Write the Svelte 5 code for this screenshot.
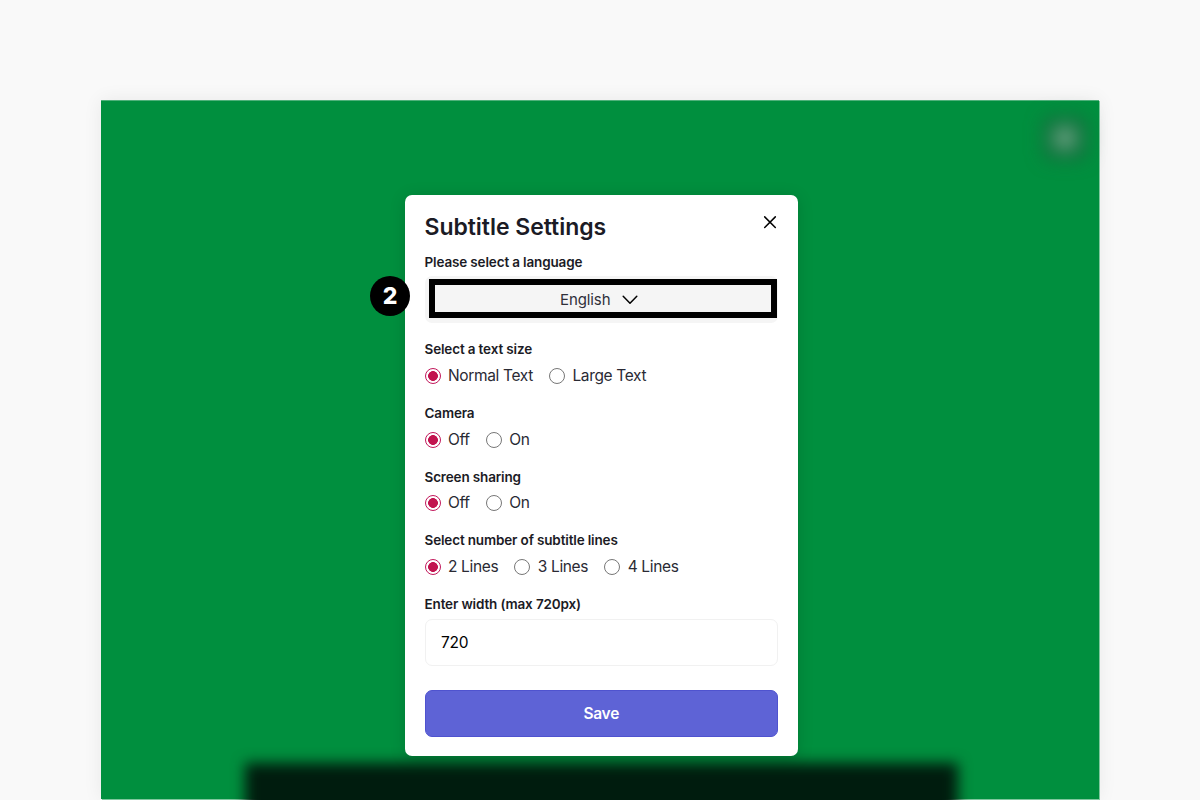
<script>
  let textSize = 'Normal Text';
  let camera = 'Off';
  let sharing = 'Off';
  let lines = '2 Lines';
  let width = '720';

  function save(e) {
    e.preventDefault();
    // TODO: store the settings
  }
</script>

<main>
  <div class="stage">
    <div class="gear"><span></span></div>
    <div class="subtitles"></div>
  </div>

  <form class="modal" on:submit={save}>
    <header>
      <h1>Subtitle Settings</h1>
      <button type="button" class="close" aria-label="Close">
        <svg width="12" height="12" viewBox="0 0 12 12">
          <path d="M0.7 0.9 L11.3 11.5 M11.3 0.9 L0.7 11.5" />
        </svg>
      </button>
    </header>

    <h2>Please select a language</h2>
    <button type="button" class="language">
      <span>English</span>
      <svg width="16" height="10" viewBox="0 0 16 10">
        <path d="M1.2 1.2 L8 8.2 L14.8 1.2" />
      </svg>
      <span class="highlight"></span>
      <span class="step">2</span>
    </button>

    <h2>Select a text size</h2>
    <div class="options">
      {#each ['Normal Text', 'Large Text'] as option}
        <label><input type="radio" name="size" value={option} bind:group={textSize} />{option}</label>
      {/each}
    </div>

    <h2>Camera</h2>
    <div class="options">
      {#each ['Off', 'On'] as option}
        <label><input type="radio" name="camera" value={option} bind:group={camera} />{option}</label>
      {/each}
    </div>

    <h2>Screen sharing</h2>
    <div class="options">
      {#each ['Off', 'On'] as option}
        <label><input type="radio" name="sharing" value={option} bind:group={sharing} />{option}</label>
      {/each}
    </div>

    <h2>Select number of subtitle lines</h2>
    <div class="options">
      {#each ['2 Lines', '3 Lines', '4 Lines'] as option}
        <label><input type="radio" name="lines" value={option} bind:group={lines} />{option}</label>
      {/each}
    </div>

    <h2>Enter width (max 720px)</h2>
    <input class="width" type="text" aria-label="Width" bind:value={width} />
    <button type="submit" class="save">Save</button>
  </form>
</main>

<style>
  :global(body) {
    margin: 0;
    background: #f9f9f9;
  }
  main {
    position: relative;
    box-sizing: border-box;
    height: 800px;
    padding: 100px 101px 1px 101px;
    overflow: hidden;
    font-family: Inter, sans-serif;
    color: #1b1b25;
  }
  .stage {
    position: relative;
    box-sizing: border-box;
    height: 100%;
    border-top: 1px solid #4fb17a;
    background: #008f3e;
    box-shadow: 1px 1px 0 #80c79e, 0 0 18px rgba(0, 0, 0, 0.07);
  }
  .gear {
    position: absolute;
    top: 15px;
    right: 12px;
    width: 44px;
    height: 44px;
    border-radius: 8px;
    background: rgba(28, 90, 60, 0.6);
    filter: blur(9px);
  }
  .gear span {
    position: absolute;
    inset: 10px;
    border-radius: 50%;
    background: rgba(140, 185, 160, 0.7);
  }
  .subtitles {
    position: absolute;
    left: 144px;
    right: 141px;
    top: 662px;
    height: 100px;
    background: #001c0e;
    filter: blur(7px);
  }
  .modal {
    position: absolute;
    top: 195px;
    left: 405px;
    box-sizing: border-box;
    width: 393px;
    height: 561px;
    padding: 17px 20px 20px 19.5px;
    border-radius: 7px;
    background: #fff;
    box-shadow: 0 2px 16px rgba(0, 0, 0, 0.15);
  }
  header {
    display: flex;
    justify-content: space-between;
    height: 30px;
    margin-bottom: 10px;
  }
  h1 {
    margin: 0;
    font-size: 23px;
    font-weight: 600;
    letter-spacing: -0.04px;
    line-height: 30px;
  }
  h2 {
    margin: 0;
    font-size: 13.5px;
    font-weight: 600;
    letter-spacing: -0.15px;
    line-height: 20px;
  }
  button {
    font-family: inherit;
    cursor: pointer;
  }
  .close {
    width: 12px;
    height: 12px;
    margin: 4px 2px 0 0;
    padding: 0;
    border: none;
    background: none;
  }
  svg {
    display: block;
    overflow: visible;
    fill: none;
    stroke: #000;
    stroke-width: 1.5;
    stroke-linecap: round;
    stroke-linejoin: round;
  }
  .language {
    position: relative;
    display: flex;
    align-items: center;
    justify-content: center;
    gap: 12px;
    width: 353.5px;
    height: 47px;
    margin: 4px 0 16px;
    padding: 0 4px 0 0;
    border: none;
    border-radius: 7px;
    background: #f5f5f5;
    color: #30303a;
    font-size: 15px;
    letter-spacing: -0.1px;
  }
  .highlight {
    position: absolute;
    left: 4.5px;
    top: 3px;
    box-sizing: border-box;
    width: 348px;
    height: 39px;
    border: 6px solid #000;
  }
  .step {
    position: absolute;
    left: -54.5px;
    top: 0;
    width: 40px;
    height: 40px;
    border-radius: 50%;
    background: #000;
    color: #fff;
    font-size: 23px;
    font-weight: 800;
    line-height: 40px;
    text-align: center;
  }
  .options {
    display: flex;
    gap: 16px;
    height: 24px;
    margin: 4.7px 0 15.15px;
  }
  label {
    display: flex;
    align-items: center;
    color: #2a2a34;
    font-size: 15.5px;
    letter-spacing: -0.35px;
    line-height: 24px;
  }
  label input {
    appearance: none;
    box-sizing: border-box;
    width: 16px;
    height: 16px;
    margin: 0 7.5px 0 0;
    border: 1px solid #777;
    border-radius: 50%;
    background: #fff;
  }
  label input:checked {
    border: 1.2px solid #c2185b;
    background: radial-gradient(circle, #c2134f 4.6px, #fff 5.2px);
  }
  .width {
    display: block;
    box-sizing: border-box;
    width: 353.5px;
    height: 47px;
    margin: 4.6px 0 24px;
    padding: 0 15.5px;
    border: 1px solid #f1f1f1;
    border-radius: 7px;
    color: #000;
    font-family: inherit;
    font-size: 15.5px;
    letter-spacing: -0.2px;
  }
  .save {
    display: block;
    width: 353.5px;
    height: 47px;
    border: 1px solid #4f53cf;
    border-radius: 7px;
    background: #5e63d6;
    color: #fff;
    font-size: 15.5px;
    font-weight: 600;
    letter-spacing: -0.25px;
  }
</style>
